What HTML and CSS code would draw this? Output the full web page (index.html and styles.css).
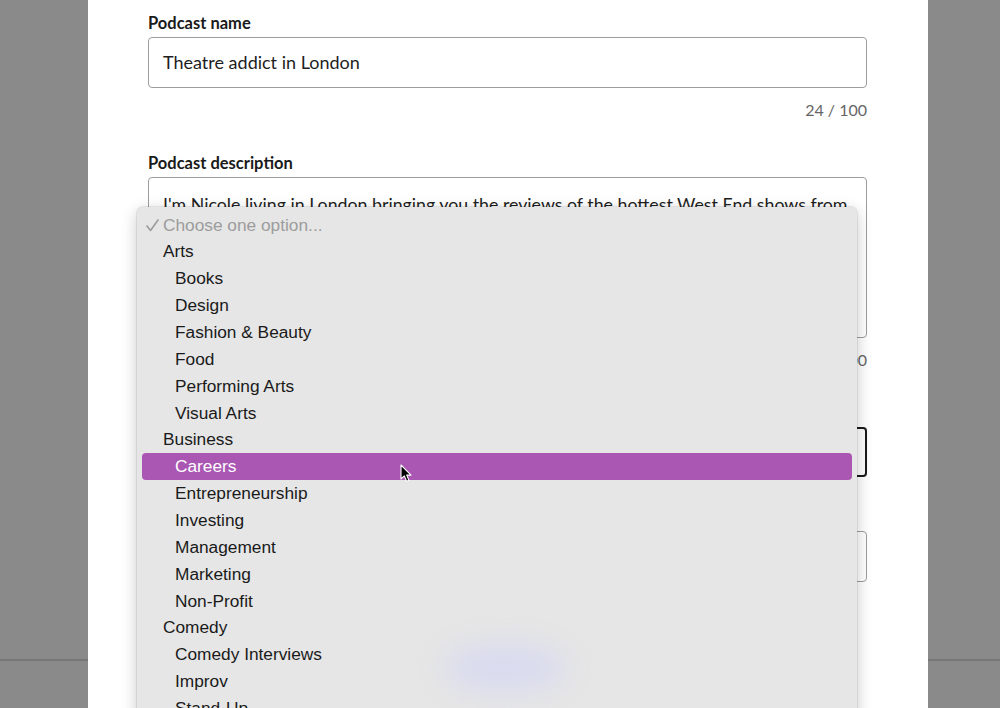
FILE: index.html
```html
<!DOCTYPE html>
<html lang="en">
<head>
<meta charset="utf-8">
<title>Podcast details</title>
<link rel="stylesheet" href="styles.css">
</head>
<body>
<div class="modal">
  <div class="field">
    <div class="label">Podcast name</div>
    <div class="input">Theatre addict in London</div>
    <div class="counter">24 / 100</div>
  </div>
  <div class="field">
    <div class="label">Podcast description</div>
    <div class="textarea">I'm Nicole living in London bringing you the reviews of the hottest West End shows from</div>
    <div class="counter">86 / 600</div>
  </div>
  <div class="field">
    <div class="label empty"></div>
    <div class="input select"></div>
  </div>
  <div class="field">
    <div class="label empty"></div>
    <div class="input"></div>
  </div>
</div>

<div class="menu">
  <div class="blob"></div>
  <div class="item placeholder">
    <svg class="check" width="13" height="13" viewBox="0 0 13 13"><path d="M1 7 L4.5 11.5 L12 1" fill="none" stroke="#9c9c9c" stroke-width="1.6" stroke-linecap="round" stroke-linejoin="round"/></svg>
    <span>Choose one option...</span>
  </div>
  <div class="item group">Arts</div>
  <div class="item sub">Books</div>
  <div class="item sub">Design</div>
  <div class="item sub">Fashion &amp; Beauty</div>
  <div class="item sub">Food</div>
  <div class="item sub">Performing Arts</div>
  <div class="item sub">Visual Arts</div>
  <div class="item group">Business</div>
  <div class="item sub active">Careers</div>
  <div class="item sub">Entrepreneurship</div>
  <div class="item sub">Investing</div>
  <div class="item sub">Management</div>
  <div class="item sub">Marketing</div>
  <div class="item sub">Non-Profit</div>
  <div class="item group">Comedy</div>
  <div class="item sub">Comedy Interviews</div>
  <div class="item sub">Improv</div>
  <div class="item sub">Stand-Up</div>
</div>

<svg class="cursor" width="13" height="19" viewBox="0 0 13 19"><path d="M1 1 V15 L4.3 11.9 L6.6 17.2 L8.9 16.2 L6.7 11.1 H11 Z" fill="#000" stroke="#fff" stroke-width="1.1" stroke-linejoin="round"/></svg>
</body>
</html>
```
FILE: styles.css
```css
html, body {
  margin: 0;
  padding: 0;
}
body {
  width: 1000px;
  height: 708px;
  overflow: hidden;
  position: relative;
  background: linear-gradient(to bottom, #8a8a8a 0, #8a8a8a 659px, #777 659px, #777 661px, #8a8a8a 661px);
  font-family: "Lato", "Liberation Sans", sans-serif;
  color: #1f1f1f;
}
.modal {
  margin-left: 88px;
  width: 840px;
  height: 708px;
  box-sizing: border-box;
  background: #fff;
  padding: 13px 61px 0 60px;
}
.field {
  display: flex;
  flex-direction: column;
}
.field + .field {
  margin-top: 33px;
}
.label {
  font-weight: 700;
  font-size: 16.5px;
  line-height: 20px;
  color: #1a1a1a;
}
.label.empty {
  height: 20px;
}
.input {
  margin-top: 4px;
  height: 51px;
  box-sizing: border-box;
  border: 1px solid #9d9d9d;
  border-radius: 4px;
  padding: 0 14px;
  font-size: 18px;
  line-height: 49px;
  color: #1e1e1e;
}
.select {
  height: 50px;
  border: 2px solid #1b1b1b;
}
.textarea {
  margin-top: 4px;
  height: 161px;
  box-sizing: border-box;
  border: 1px solid #9d9d9d;
  border-radius: 4px;
  padding: 13px 14px 0;
  font-size: 17.75px;
  line-height: 26px;
  color: #1e1e1e;
  white-space: nowrap;
  overflow: hidden;
}
.counter {
  margin-top: 12px;
  font-size: 16px;
  line-height: 20px;
  text-align: right;
  color: #666;
}
.field:nth-child(4) {
  margin-top: 30px;
}
.menu {
  position: absolute;
  left: 137px;
  top: 207px;
  width: 720px;
  height: 560px;
  box-sizing: border-box;
  padding-top: 4.6px;
  background: #e6e6e6;
  border-radius: 6px;
  box-shadow: 0 0 0 1px rgba(0, 0, 0, 0.07), 0 4px 16px rgba(0, 0, 0, 0.22);
  font-family: "Liberation Sans", Arial, sans-serif;
  font-size: 17.3px;
  color: #1a1a1a;
}
.blob {
  position: absolute;
  left: 306px;
  top: 436px;
  width: 124px;
  height: 50px;
  border-radius: 50%;
  background: #d9dbef;
  filter: blur(14px);
}
.item {
  position: relative;
  height: 26.86px;
  line-height: 26.86px;
  margin: 0 5px;
  border-radius: 4px;
  white-space: nowrap;
}
.placeholder {
  display: flex;
  align-items: center;
  gap: 4px;
  padding-left: 4px;
  color: #9c9c9c;
}
.check {
  flex: none;
  margin-top: 1px;
}
.group {
  padding-left: 21px;
}
.sub {
  padding-left: 33px;
}
.active {
  background: #a957b3;
  color: #fff;
}
.cursor {
  position: absolute;
  left: 400px;
  top: 464px;
}
```
